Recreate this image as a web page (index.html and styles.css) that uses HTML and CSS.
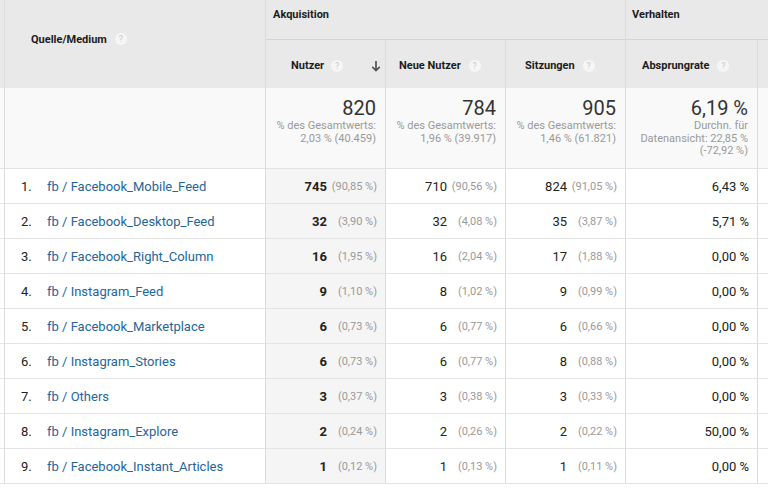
FILE: index.html
```html
<!DOCTYPE html>
<html lang="de">
<head>
<meta charset="utf-8">
<title>Quelle/Medium</title>
<link rel="stylesheet" href="styles.css">
</head>
<body>
<div class="report">
  <div class="hd pre span-rows"></div>
  <div class="hd src span-rows"><span>Quelle/Medium</span><span class="help">?</span></div>
  <div class="hd group akq">Akquisition</div>
  <div class="hd group verh">Verhalten</div>
  <div class="hd metric m-users"><span>Nutzer</span><span class="help">?</span>
    <svg class="sort" width="10" height="12" viewBox="0 0 10 12"><path d="M5 1V10.5M1.3 6.8L5 10.5L8.7 6.8" fill="none" stroke="#555" stroke-width="1.7"/></svg>
  </div>
  <div class="hd metric m-new"><span>Neue Nutzer</span><span class="help">?</span></div>
  <div class="hd metric m-sess"><span>Sitzungen</span><span class="help">?</span></div>
  <div class="hd metric m-bounce"><span>Absprungrate</span><span class="help">?</span></div>
  <div class="hd metric last"></div>

  <div class="tot pre"></div>
  <div class="tot"></div>
  <div class="tot num"><div class="big">820</div><div class="sub">% des Gesamtwerts:</div><div class="sub">2,03 % (40.459)</div></div>
  <div class="tot num"><div class="big">784</div><div class="sub">% des Gesamtwerts:</div><div class="sub">1,96 % (39.917)</div></div>
  <div class="tot num"><div class="big">905</div><div class="sub">% des Gesamtwerts:</div><div class="sub">1,46 % (61.821)</div></div>
  <div class="tot num"><div class="big">6,19 %</div><div class="sub">Durchn. für</div><div class="sub">Datenansicht: 22,85 %</div><div class="sub">(-72,92 %)</div></div>
  <div class="tot last"></div>

  <div class="c pre"></div><div class="c src"><span class="idx">1.</span><a class="lnk">fb / Facebook_Mobile_Feed</a></div>
  <div class="c val sorted"><b>745</b><span class="pct">(90,85 %)</span></div>
  <div class="c val">710<span class="pct">(90,56 %)</span></div>
  <div class="c val">824<span class="pct">(91,05 %)</span></div>
  <div class="c val">6,43 %</div><div class="c last"></div>

  <div class="c pre"></div><div class="c src"><span class="idx">2.</span><a class="lnk">fb / Facebook_Desktop_Feed</a></div>
  <div class="c val sorted"><b>32</b><span class="pct">(3,90 %)</span></div>
  <div class="c val">32<span class="pct">(4,08 %)</span></div>
  <div class="c val">35<span class="pct">(3,87 %)</span></div>
  <div class="c val">5,71 %</div><div class="c last"></div>

  <div class="c pre"></div><div class="c src"><span class="idx">3.</span><a class="lnk">fb / Facebook_Right_Column</a></div>
  <div class="c val sorted"><b>16</b><span class="pct">(1,95 %)</span></div>
  <div class="c val">16<span class="pct">(2,04 %)</span></div>
  <div class="c val">17<span class="pct">(1,88 %)</span></div>
  <div class="c val">0,00 %</div><div class="c last"></div>

  <div class="c pre"></div><div class="c src"><span class="idx">4.</span><a class="lnk">fb / Instagram_Feed</a></div>
  <div class="c val sorted"><b>9</b><span class="pct">(1,10 %)</span></div>
  <div class="c val">8<span class="pct">(1,02 %)</span></div>
  <div class="c val">9<span class="pct">(0,99 %)</span></div>
  <div class="c val">0,00 %</div><div class="c last"></div>

  <div class="c pre"></div><div class="c src"><span class="idx">5.</span><a class="lnk">fb / Facebook_Marketplace</a></div>
  <div class="c val sorted"><b>6</b><span class="pct">(0,73 %)</span></div>
  <div class="c val">6<span class="pct">(0,77 %)</span></div>
  <div class="c val">6<span class="pct">(0,66 %)</span></div>
  <div class="c val">0,00 %</div><div class="c last"></div>

  <div class="c pre"></div><div class="c src"><span class="idx">6.</span><a class="lnk">fb / Instagram_Stories</a></div>
  <div class="c val sorted"><b>6</b><span class="pct">(0,73 %)</span></div>
  <div class="c val">6<span class="pct">(0,77 %)</span></div>
  <div class="c val">8<span class="pct">(0,88 %)</span></div>
  <div class="c val">0,00 %</div><div class="c last"></div>

  <div class="c pre"></div><div class="c src"><span class="idx">7.</span><a class="lnk">fb / Others</a></div>
  <div class="c val sorted"><b>3</b><span class="pct">(0,37 %)</span></div>
  <div class="c val">3<span class="pct">(0,38 %)</span></div>
  <div class="c val">3<span class="pct">(0,33 %)</span></div>
  <div class="c val">0,00 %</div><div class="c last"></div>

  <div class="c pre"></div><div class="c src"><span class="idx">8.</span><a class="lnk">fb / Instagram_Explore</a></div>
  <div class="c val sorted"><b>2</b><span class="pct">(0,24 %)</span></div>
  <div class="c val">2<span class="pct">(0,26 %)</span></div>
  <div class="c val">2<span class="pct">(0,22 %)</span></div>
  <div class="c val">50,00 %</div><div class="c last"></div>

  <div class="c pre"></div><div class="c src"><span class="idx">9.</span><a class="lnk">fb / Facebook_Instant_Articles</a></div>
  <div class="c val sorted"><b>1</b><span class="pct">(0,12 %)</span></div>
  <div class="c val">1<span class="pct">(0,13 %)</span></div>
  <div class="c val">1<span class="pct">(0,11 %)</span></div>
  <div class="c val">0,00 %</div><div class="c last"></div>
</div>
</body>
</html>
```

FILE: styles.css
```css
html, body {
  margin: 0;
  padding: 0;
  background: #fff;
  width: 768px;
  height: 500px;
  overflow: hidden;
  font-family: Roboto, "Liberation Sans", Arial, sans-serif;
  color: #222;
}

.report {
  display: grid;
  grid-template-columns: 5px 261px 120px 120px 120px 132px 10px;
  grid-template-rows: 40px 48px 81px repeat(9, 35px);
  width: 768px;
}

.report > div {
  box-sizing: border-box;
  border-right: 1px solid #dcdcdc;
}
.report > .last { border-right: none; }

/* header */
.hd {
  background: #e9e9e9;
  font-size: 11px;
  font-weight: 700;
  color: #1c1c1c;
  display: flex;
  align-items: center;
  border-right-color: #d5d5d5;
}
.span-rows { grid-row: span 2; }
.hd.src {
  padding-left: 26px;
  padding-bottom: 10px;
}
.hd.group {
  align-items: flex-start;
  padding: 8px 0 0 6px;
  line-height: 14px;
  border-bottom: 1px solid #d5d5d5;
}
.hd.akq { grid-column: span 3; padding-left: 7px; }
.hd.verh { grid-column: span 2; border-right: none; }
.hd.metric { padding-top: 3px; }
.m-users { padding-left: 25px; padding-right: 4px; }
.m-new { padding-left: 13px; }
.m-sess { padding-left: 19px; }
.m-bounce { padding-left: 16px; }

.help {
  display: inline-block;
  width: 12px;
  height: 12px;
  margin-left: 8px;
  border-radius: 50%;
  background: #f6f6f6;
  color: #c9c9c9;
  font-size: 9px;
  font-weight: 400;
  line-height: 12px;
  text-align: center;
}
.m-users .help { margin-left: 7px; }
.sort { margin-left: auto; display: block; }

/* totals */
.tot {
  background: #f9f9f9;
  border-bottom: 1px solid #e2e2e2;
}
.tot.num {
  text-align: right;
  padding: 8px 9px 0 0;
}
.big {
  font-size: 20px;
  line-height: 24px;
  color: #333;
}
.sub {
  font-size: 11px;
  line-height: 12.5px;
  color: #9a9a9a;
}

/* data rows */
.c {
  border-bottom: 1px solid #e4e4e4;
  display: flex;
  align-items: center;
  font-size: 13px;
  color: #222;
}
.c.src { padding-left: 16px; }
.idx {
  display: inline-block;
  width: 26px;
}
.lnk {
  color: #24669a;
  text-decoration: none;
}
.val {
  justify-content: flex-end;
  padding-right: 8px;
}
.val b { font-weight: 700; }
.sorted { background: #f5f5f5; }
.pct {
  display: inline-block;
  width: 46px;
  margin-left: 4px;
  text-align: right;
  font-size: 11px;
  color: #9a9a9a;
}
```
